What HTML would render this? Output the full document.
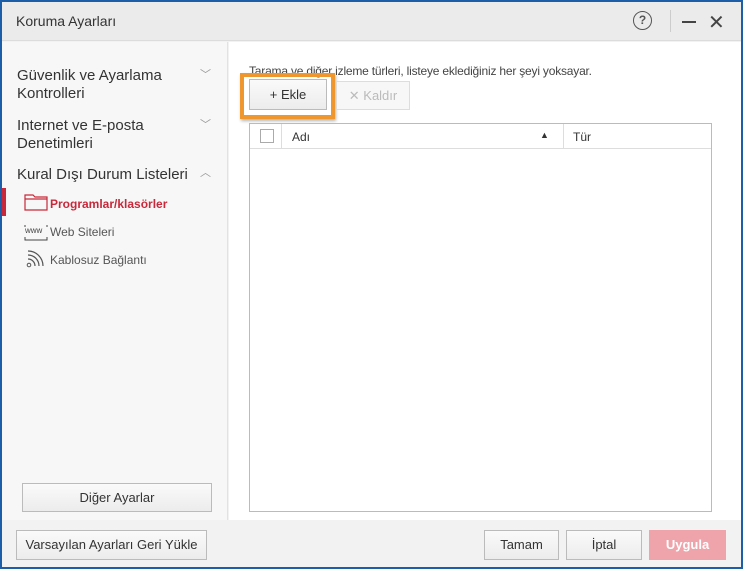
<!DOCTYPE html>
<html><head><meta charset="utf-8"><style>
*{margin:0;padding:0;box-sizing:border-box}
body{width:743px;height:569px;background:#1d5ea8;font-family:"Liberation Sans",sans-serif;position:relative;overflow:hidden;color:#333}
.win{position:absolute;left:2px;top:2px;width:739px;height:565px;background:#f2f2f2}
.title{position:absolute;left:0;top:0;width:739px;height:39px;background:#ebebeb;border-bottom:1px solid #dcdcdc}
.title span{position:absolute;left:14px;top:11px;font-size:14px;color:#333}
.left{position:absolute;left:0;top:40px;width:226px;height:478px;background:#f7f7f7;border-right:1px solid #e2e2e2}
.right{position:absolute;left:227px;top:40px;width:512px;height:478px;background:#fff}
.nav{position:absolute;left:15px;font-size:15px;color:#333;line-height:18px}
.chev{position:absolute;left:198px;font-size:11px;color:#999}
.sub{position:absolute;left:48px;font-size:12px;color:#555}
.btn{position:absolute;border:1px solid #bbb;background:linear-gradient(#fafafa,#ececec);font-size:13px;color:#333;text-align:center}
.foot{position:absolute;left:0;top:518px;width:739px;height:47px;background:#f2f2f2}
</style></head><body>
<div class="win">
<div class="title"><span>Koruma Ayarları</span>
<div style="position:absolute;left:631px;top:9px;width:19px;height:19px;border:1.5px solid #555;border-radius:50%;font-size:12px;text-align:center;line-height:16px;color:#555;font-weight:bold">?</div>
<div style="position:absolute;left:668px;top:8px;width:1px;height:22px;background:#ccc"></div>
<div style="position:absolute;left:680px;top:19px;width:14px;height:2px;background:#444"></div>
<div style="position:absolute;left:706px;top:8px;font-size:20px;color:#444">✕</div>
</div>
<div class="left">
<div class="nav" style="top:25px">Güvenlik ve Ayarlama<br>Kontrolleri</div><div class="chev" style="top:24px">﹀</div>
<div class="nav" style="top:75px">Internet ve E-posta<br>Denetimleri</div><div class="chev" style="top:74px">﹀</div>
<div class="nav" style="top:124px">Kural Dışı Durum Listeleri</div><div class="chev" style="top:122px">︿</div>
<div style="position:absolute;left:0;top:146px;width:4px;height:28px;background:#c8283a"></div>
<svg style="position:absolute;left:22px;top:151px" width="24" height="18"><path d="M1 2h8l2 2h12v13H1z M1 6h22" fill="none" stroke="#c8283a" stroke-width="1.2"/></svg>
<div class="sub" style="top:155px;color:#c8283a;font-weight:bold">Programlar/klasörler</div>
<svg style="position:absolute;left:22px;top:181px" width="24" height="18"><text x="1" y="10" font-size="8" font-family="Liberation Sans" fill="#444">www</text><path d="M1 2v2M23 2v2M1 14v3h22v-3" fill="none" stroke="#444"/></svg>
<div class="sub" style="top:183px">Web Siteleri</div>
<svg style="position:absolute;left:24px;top:207px" width="20" height="20"><circle cx="3" cy="16" r="1.8" fill="none" stroke="#555"/><path d="M2 10a7 7 0 0 1 7 7M2 6a11 11 0 0 1 11 11M2 2a15 15 0 0 1 15 15" fill="none" stroke="#555" stroke-width="1.2"/></svg>
<div class="sub" style="top:211px">Kablosuz Bağlantı</div>
<div class="btn" style="left:20px;top:441px;width:190px;height:29px;line-height:27px">Diğer Ayarlar</div>
</div>
<div class="right">
<div style="position:absolute;left:20px;top:22px;font-size:12px;color:#444;letter-spacing:-0.2px">Tarama ve diğer izleme türleri, listeye eklediğiniz her şeyi yoksayar.</div>
<div style="position:absolute;left:11px;top:31px;width:95px;height:46px;border:4px solid #f0962e;box-shadow:1px 2px 3px rgba(0,0,0,.3)"></div>
<div class="btn" style="left:20px;top:37px;width:78px;height:31px;line-height:29px">+ Ekle</div>
<div class="btn" style="left:107px;top:39px;width:74px;height:29px;line-height:27px;color:#bbb;border-color:#ddd;background:#f7f7f7">✕ Kaldır</div>
<div style="position:absolute;left:20px;top:81px;width:463px;height:389px;border:1px solid #bbb">
<div style="height:25px;border-bottom:1px solid #ddd;position:relative;font-size:12px">
<div style="position:absolute;left:10px;top:5px;width:14px;height:14px;border:1px solid #aaa"></div>
<div style="position:absolute;left:31px;top:0;width:1px;height:25px;background:#ddd"></div>
<span style="position:absolute;left:42px;top:6px">Adı</span>
<span style="position:absolute;left:290px;top:6px;font-size:9px">▲</span>
<div style="position:absolute;left:313px;top:0;width:1px;height:25px;background:#ddd"></div>
<span style="position:absolute;left:323px;top:6px">Tür</span>
</div></div>
</div>
<div class="foot">
<div class="btn" style="left:14px;top:10px;width:191px;height:30px;line-height:28px">Varsayılan Ayarları Geri Yükle</div>
<div class="btn" style="left:482px;top:10px;width:75px;height:30px;line-height:28px">Tamam</div>
<div class="btn" style="left:564px;top:10px;width:76px;height:30px;line-height:28px">İptal</div>
<div class="btn" style="left:647px;top:10px;width:77px;height:30px;line-height:28px;background:#eea4aa;border-color:#eea4aa;color:#fff;font-weight:bold">Uygula</div>
</div>
</div>
</body></html>
